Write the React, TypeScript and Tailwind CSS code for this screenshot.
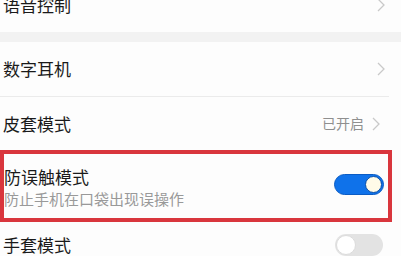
const Chevron = ({ className = '' }: { className?: string }) => (
  <svg width="8" height="14" viewBox="0 0 8 14" className={className}>
    <path d="M1 1 L7 7 L1 13" fill="none" stroke="#c9c9c9" strokeWidth="1.3" />
  </svg>
)

const Toggle = ({ on }: { on: boolean }) =>
  on ? (
    <div className="flex h-[21px] w-[50px] items-center justify-end rounded-full border border-[#0b5cc4] bg-[#0f72ea] pr-[1px]">
      <div className="h-[17px] w-[17px] rounded-full border border-[#0a4fa8] bg-[#fffbe8]" />
    </div>
  ) : (
    <div className="flex h-[22px] w-[48px] items-center rounded-full bg-[#e3e3e3] pl-[1px]">
      <div className="h-[20px] w-[20px] rounded-full border border-[#dcdcdc] bg-white" />
    </div>
  )

export default function App() {
  return (
    <div
      className="h-[256px] w-[401px] overflow-hidden bg-[#fdfdfd] text-[#1a1a1a]"
      style={{ fontFamily: '"Noto Sans CJK SC", "Noto Sans", sans-serif' }}
    >
      {/* 语音控制 (cut off at top) */}
      <div className="-mt-[22px] flex h-[54px] items-center justify-between pl-[3px] pr-[16px]">
        <span className="text-[17px]">语音控制</span>
        <Chevron />
      </div>

      {/* group separator */}
      <div className="h-[10px] bg-[#f2f2f2]" />

      <div className="flex h-[54px] items-center justify-between pl-[3px] pr-[16px]">
        <span className="text-[17px]">数字耳机</span>
        <Chevron />
      </div>
      <div className="mr-[12px] h-px bg-[#ebebeb]" />

      <div className="flex h-[53px] items-center justify-between pl-[3px] pr-[21px]">
        <span className="text-[17px]">皮套模式</span>
        <div className="flex items-center gap-[8px]">
          <span className="text-[14px] text-[#8f8f8f]">已开启</span>
          <Chevron />
        </div>
      </div>

      {/* highlighted row */}
      <div className="mr-[9px] flex h-[72px] items-center justify-between border-4 border-[#d9363d] pl-0 pr-[4px]">
        <div className="flex flex-col pt-[2px]">
          <span className="text-[17px] leading-[23px]">防误触模式</span>
          <span className="text-[15px] leading-[22px] text-[#999999]">防止手机在口袋出现误操作</span>
        </div>
        <div className="-mt-[4px]">
          <Toggle on />
        </div>
      </div>

      <div className="flex h-[46px] items-center justify-between pl-[3px] pr-[18px]">
        <span className="text-[17px]">手套模式</span>
        <Toggle on={false} />
      </div>
    </div>
  )
}
